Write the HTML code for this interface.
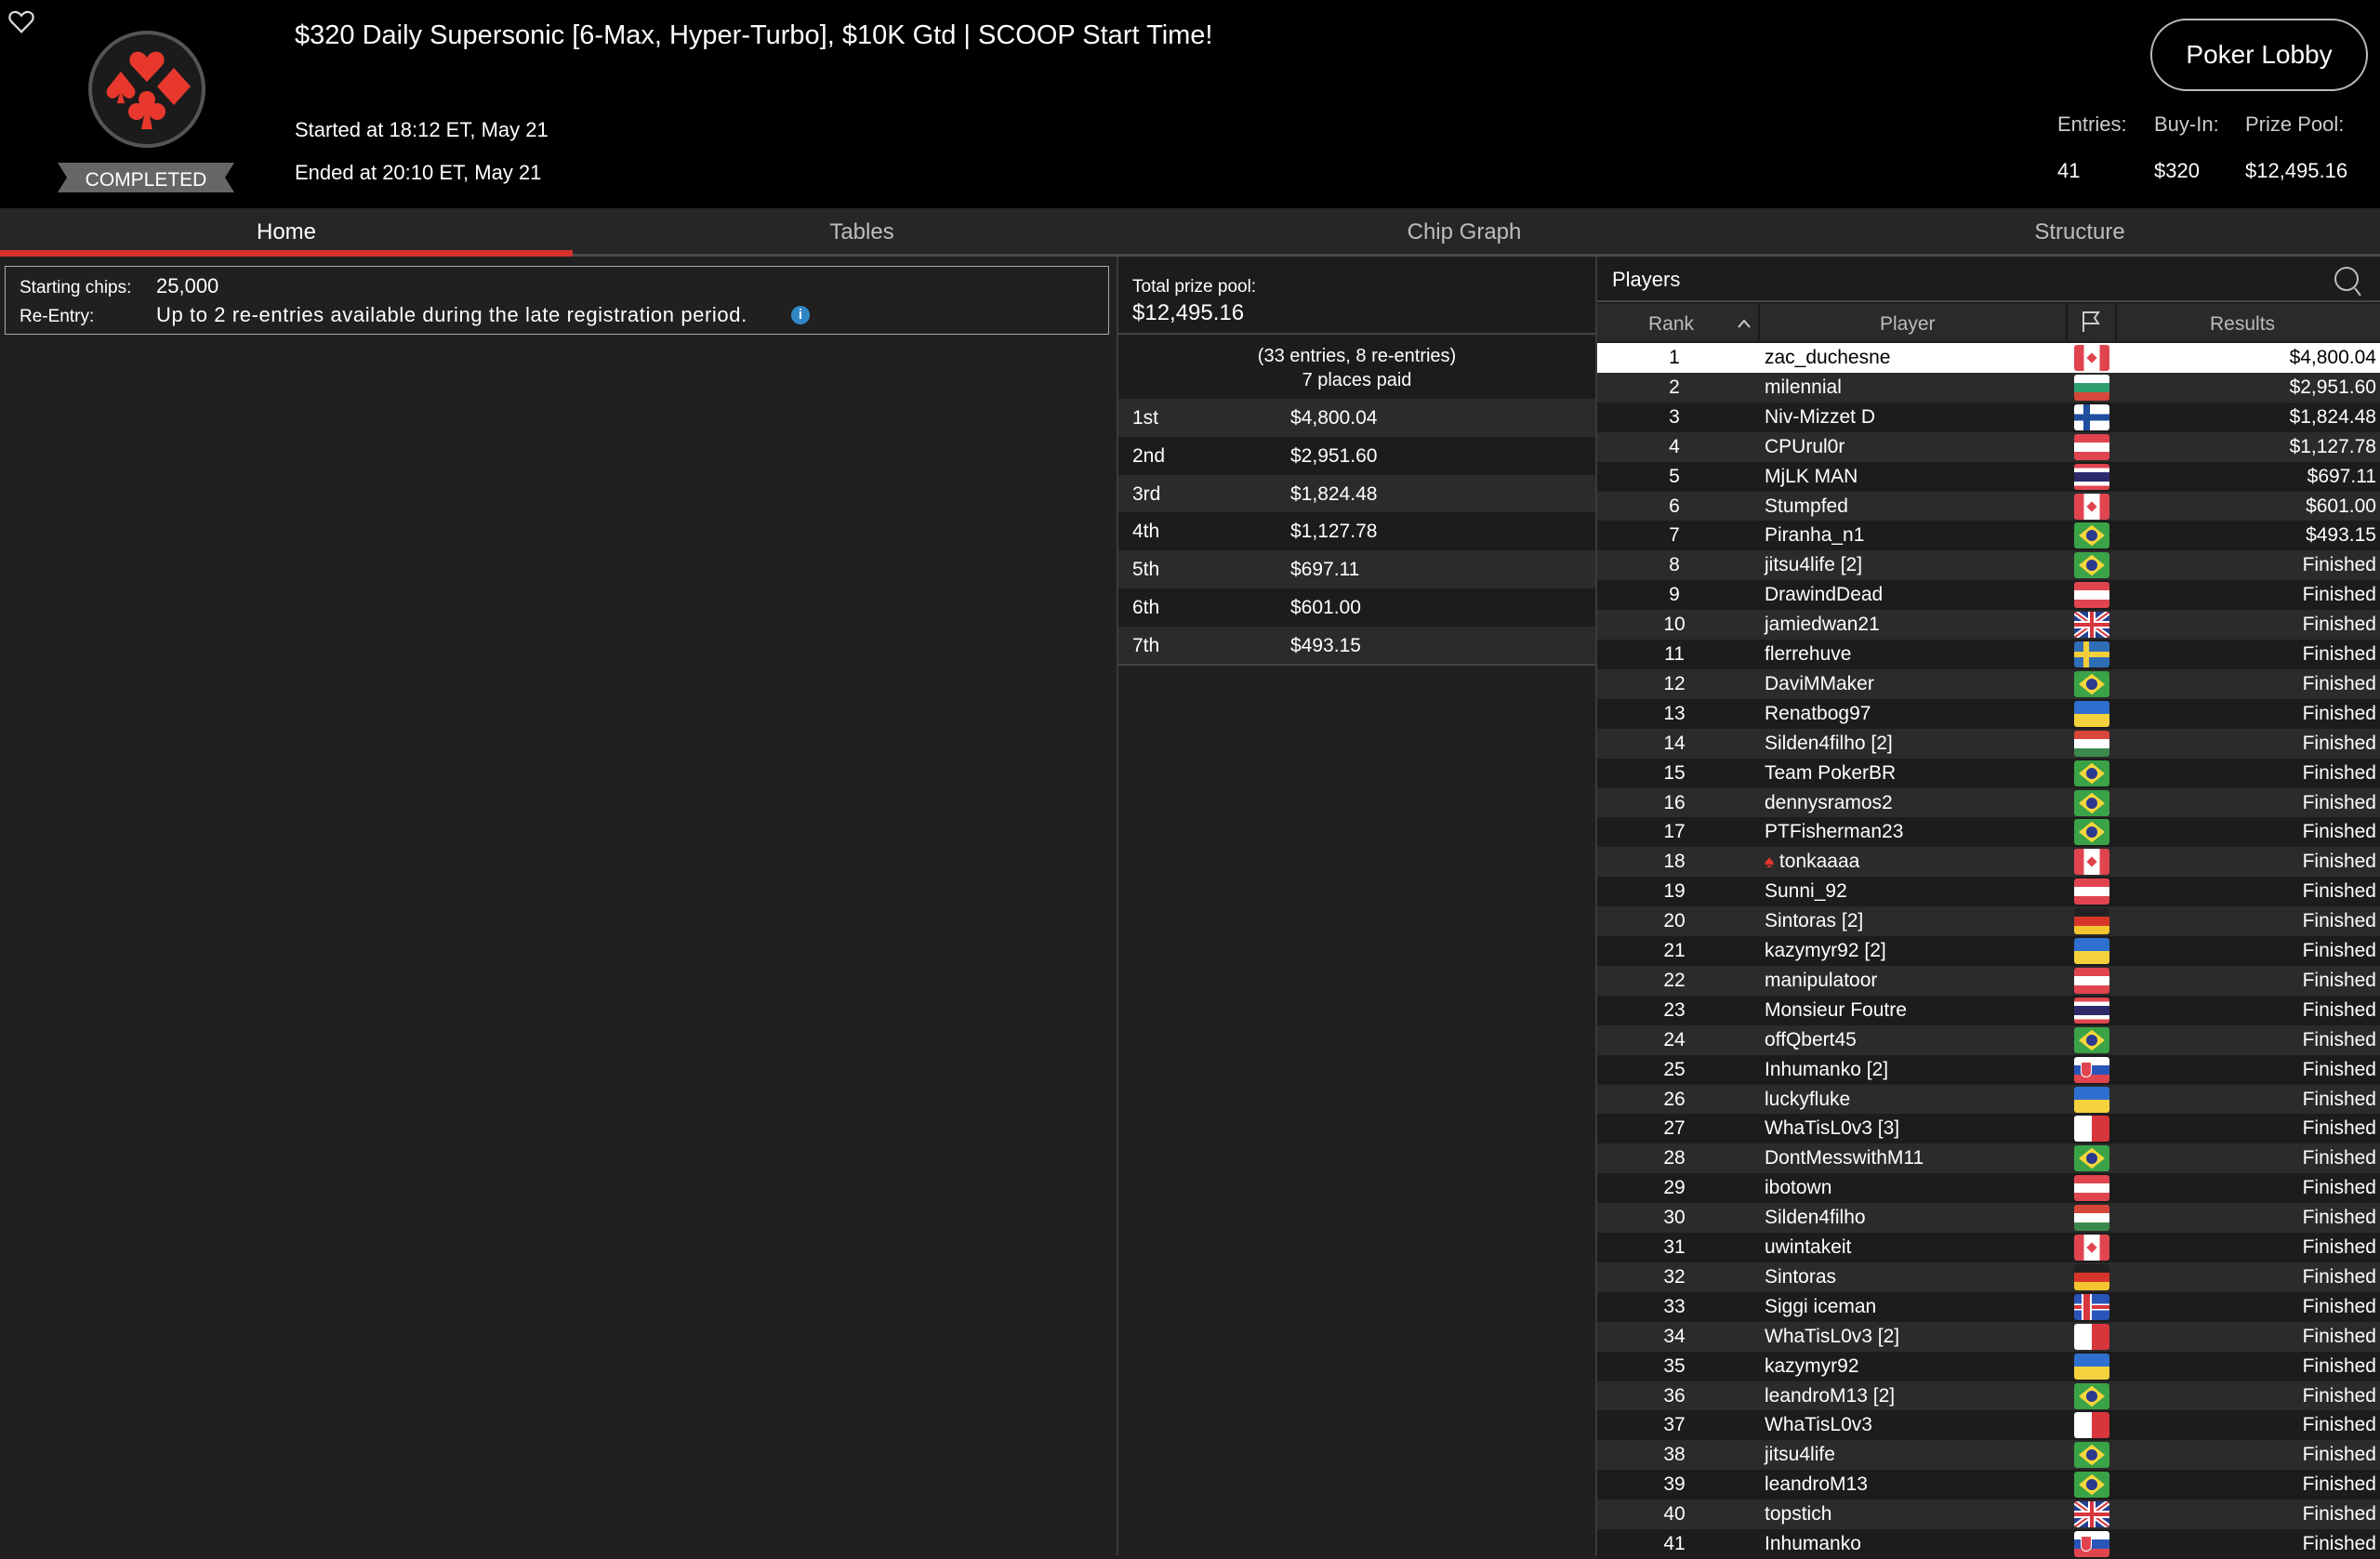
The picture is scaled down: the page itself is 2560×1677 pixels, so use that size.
<!DOCTYPE html>
<html><head><meta charset="utf-8"><style>
*{margin:0;padding:0;box-sizing:border-box}
body{width:2560px;height:1673px;overflow:hidden;background:#202020;font-family:"Liberation Sans",sans-serif;color:#fff;position:relative}
.abs{position:absolute}
#hdr{left:0;top:0;width:2560px;height:224px;background:#000}
#tabs{left:0;top:224px;width:2560px;height:52px;background:#262626;border-bottom:3px solid #4a4a4a}
.tab{position:absolute;top:0;width:640px;height:49px;line-height:52px;text-align:center;font-size:24px;color:#bdbdbd}
.fl{position:absolute;left:513px;top:2px;width:38px;height:28px;border-radius:3px;overflow:hidden}
.AT{background:linear-gradient(#e0454f 33%,#fff 33% 67%,#e0454f 67%)}
.CA{background:linear-gradient(90deg,#e0454f 27%,#fff 27% 73%,#e0454f 73%)}
.CA::after{content:"";position:absolute;left:15px;top:10px;width:8px;height:8px;background:#e0454f;transform:rotate(45deg)}
.BG{background:linear-gradient(#fff 33%,#2f9e6e 33% 67%,#d8463a 67%)}
.FI{background:linear-gradient(#fff 38%,#1f4ea0 38% 62%,#fff 62%)}
.FI::after{content:"";position:absolute;left:10px;top:0;width:7px;height:28px;background:#1f4ea0}
.TH{background:linear-gradient(#e0454f 16%,#fff 16% 33%,#2d2a6b 33% 67%,#fff 67% 84%,#e0454f 84%)}
.BR{background:#3aa247}
.BR::before{content:"";position:absolute;left:8px;top:3px;width:22px;height:22px;background:#f4d73a;transform:scaleX(1.25) rotate(45deg) scale(.72)}
.BR::after{content:"";position:absolute;left:13px;top:8px;width:12px;height:12px;border-radius:50%;background:#2b3a8f}
.GB{background:#243f8f}
.SE{background:linear-gradient(#2f6db5 40%,#f4cf3a 40% 60%,#2f6db5 60%)}
.SE::after{content:"";position:absolute;left:10px;top:0;width:6px;height:28px;background:#f4cf3a}
.UA{background:linear-gradient(#2f6fd0 50%,#f4d23d 50%)}
.HU{background:linear-gradient(#d8463a 33%,#fff 33% 67%,#3c8a4b 67%)}
.DE{background:linear-gradient(#222 33%,#d8352a 33% 67%,#f3c530 67%)}
.SK{background:linear-gradient(#fff 33%,#2a55b8 33% 67%,#e0454f 67%)}
.SK::after{content:"";position:absolute;left:7px;top:5px;width:10px;height:15px;border-radius:2px 2px 6px 6px;background:#e0454f;border:1px solid #fff}
.MT{background:linear-gradient(90deg,#fff 50%,#d8363d 50%)}
.IS{background:linear-gradient(#2a55b8 38%,#fff 38% 42%,#d8363d 42% 58%,#fff 58% 62%,#2a55b8 62%)}
.IS::after{content:"";position:absolute;left:10px;top:0;width:7px;height:28px;background:#d8363d;box-shadow:0 0 0 2px #fff}
.r{position:absolute;left:1718px;width:842px;height:31.9px;font-size:21px;line-height:32px}
.r:nth-child(odd){background:#1c1c1c}
.r:nth-child(even){background:#2b2b2b}
.r .k{position:absolute;left:0;width:166px;text-align:center}
.r .n{position:absolute;left:180px}
.r .v{position:absolute;right:4px}
.pr{position:absolute;left:1203px;width:513px;height:40.8px;line-height:41px;font-size:21px}
.pr .a{position:absolute;left:185px}
.pr span:first-child{position:absolute;left:15px}
</style></head><body>
<div id="hdr" class="abs"></div>
<svg class="abs" style="left:8px;top:8px" width="30" height="30" viewBox="0 0 24 24"><path d="M12 21 L3.5 12.3 C1 9.6 1.5 5.5 4.8 4.3 C7.4 3.3 10 4.6 12 7 C14 4.6 16.6 3.3 19.2 4.3 C22.5 5.5 23 9.6 20.5 12.3 Z" fill="none" stroke="#ddd" stroke-width="1.8"/></svg>
<svg class="abs" style="left:93px;top:31px" width="130" height="130">
<circle cx="65" cy="65" r="61" fill="#1b1b1b" stroke="#555" stroke-width="4"/>
<g fill="#e8382e">
<path transform="translate(45,21) scale(1,0.95)" d="M20 38 L4 20 C-2 13 3 2 12 4 C16 5 19 8 20 11 C21 8 24 5 28 4 C37 2 42 13 36 20 Z"/>
<path transform="translate(20,44) scale(0.85,0.95)" d="M20 2 L4 20 C-2 27 6 36 14 31 C16 30 18 28 19 26 L15 38 H25 L21 26 C22 28 24 30 26 31 C34 36 42 27 36 20 Z"/>
<path transform="translate(74,42)" d="M20 0 L38 20 L20 40 L2 20 Z"/>
<g transform="translate(45,67)"><circle cx="20" cy="9" r="9"/><circle cx="9" cy="22" r="9"/><circle cx="31" cy="22" r="9"/><circle cx="20" cy="20" r="6"/><path d="M18 22 L14 41 H26 L22 22 Z"/></g>
</g></svg>
<svg class="abs" style="left:62px;top:175px" width="190" height="32"><polygon points="0,0 190,0 180,16 190,32 0,32 10,16" fill="#666"/><text x="95" y="25" fill="#fff" font-family="Liberation Sans" font-size="21" text-anchor="middle">COMPLETED</text></svg>
<div class="abs" style="left:317px;top:22px;font-size:29px">$320 Daily Supersonic [6-Max, Hyper-Turbo], $10K Gtd | SCOOP Start Time!</div>
<div class="abs" style="left:317px;top:127px;font-size:22px">Started at 18:12 ET, May 21</div>
<div class="abs" style="left:317px;top:173px;font-size:22px">Ended at 20:10 ET, May 21</div>
<div class="abs" style="left:2313px;top:20px;width:234px;height:78px;border:2px solid #bbb;border-radius:40px;text-align:center;line-height:74px;font-size:28px">Poker Lobby</div>
<div class="abs" style="left:2213px;top:121px;font-size:22px;color:#ccc">Entries:</div>
<div class="abs" style="left:2317px;top:121px;font-size:22px;color:#ccc">Buy-In:</div>
<div class="abs" style="left:2415px;top:121px;font-size:22px;color:#ccc">Prize Pool:</div>
<div class="abs" style="left:2213px;top:171px;font-size:22px">41</div>
<div class="abs" style="left:2317px;top:171px;font-size:22px">$320</div>
<div class="abs" style="left:2415px;top:171px;font-size:22px">$12,495.16</div>

<div id="tabs" class="abs">
<div class="tab" style="left:0;color:#fff;width:616px">Home</div>
<div class="tab" style="left:607px">Tables</div>
<div class="tab" style="left:1255px">Chip Graph</div>
<div class="tab" style="left:1917px">Structure</div>
</div>
<div class="abs" style="left:0;top:269px;width:616px;height:7px;background:#d5312f"></div>

<div class="abs" style="left:5px;top:286px;width:1188px;height:74px;border:1px solid #aaa"></div>
<div class="abs" style="left:21px;top:299px;font-size:19px">Starting chips:</div>
<div class="abs" style="left:168px;top:295px;font-size:22px">25,000</div>
<div class="abs" style="left:21px;top:330px;font-size:19px">Re-Entry:</div>
<div class="abs" style="left:168px;top:326px;font-size:22px;letter-spacing:0.6px">Up to 2 re-entries available during the late registration period.</div>
<div class="abs" style="left:851px;top:329px;width:20px;height:20px;border-radius:50%;background:#2f86c5;color:#fff;font-size:15px;text-align:center;line-height:20px;font-weight:bold">i</div>

<div class="abs" style="left:1201px;top:276px;width:2px;height:1397px;background:#3a3a3a"></div>
<div class="abs" style="left:1203px;top:278px;width:513px;height:82px;background:#1c1c1c;border-bottom:2px solid #444"></div>
<div class="abs" style="left:1218px;top:298px;font-size:19px">Total prize pool:</div>
<div class="abs" style="left:1218px;top:323px;font-size:24px">$12,495.16</div>
<div class="abs" style="left:1203px;top:362px;width:513px;height:67px;background:#1c1c1c;text-align:center;font-size:20px;line-height:26px;padding-top:8px">(33 entries, 8 re-entries)<br>7 places paid</div>
<div class="pr" style="top:429px;background:#2b2b2b"><span>1st</span><span class="a">$4,800.04</span></div>
<div class="pr" style="top:469.8px;background:#1c1c1c"><span>2nd</span><span class="a">$2,951.60</span></div>
<div class="pr" style="top:510.6px;background:#2b2b2b"><span>3rd</span><span class="a">$1,824.48</span></div>
<div class="pr" style="top:551.4px;background:#1c1c1c"><span>4th</span><span class="a">$1,127.78</span></div>
<div class="pr" style="top:592.2px;background:#2b2b2b"><span>5th</span><span class="a">$697.11</span></div>
<div class="pr" style="top:633px;background:#1c1c1c"><span>6th</span><span class="a">$601.00</span></div>
<div class="pr" style="top:673.8px;background:#2b2b2b"><span>7th</span><span class="a">$493.15</span></div>
<div class="abs" style="left:1203px;top:714px;width:513px;height:2px;background:#444"></div>
<div class="abs" style="left:1716px;top:276px;width:2px;height:1397px;background:#3a3a3a"></div>

<div class="abs" style="left:1718px;top:278px;width:842px;height:47px;background:#1c1c1c;border-bottom:2px solid #444"></div>
<div class="abs" style="left:1734px;top:288px;font-size:22px">Players</div>
<svg class="abs" style="left:2508px;top:284px" width="34" height="38" viewBox="0 0 34 38"><circle cx="16" cy="16" r="12" fill="none" stroke="#bbb" stroke-width="2"/><path d="M25 26 L31 34" stroke="#bbb" stroke-width="2"/></svg>
<div class="abs" style="left:1718px;top:327px;width:842px;height:40px;background:#2a2a2a"></div>
<div class="abs" style="left:1891px;top:327px;width:2px;height:40px;background:#1a1a1a"></div>
<div class="abs" style="left:2222px;top:327px;width:2px;height:40px;background:#1a1a1a"></div>
<div class="abs" style="left:2275px;top:327px;width:2px;height:40px;background:#1a1a1a"></div>
<div class="abs" style="left:1773px;top:337px;font-size:21px;color:#bbb">Rank</div>
<svg class="abs" style="left:1868px;top:342px" width="16" height="12"><path d="M2 10 L8 3 L14 10" fill="none" stroke="#ccc" stroke-width="2"/></svg>
<div class="abs" style="left:2022px;top:337px;font-size:21px;color:#bbb">Player</div>
<svg class="abs" style="left:2236px;top:333px" width="26" height="26" viewBox="0 0 26 26"><path d="M5 24 V3 H21 L17 9 L21 15 H5" fill="none" stroke="#ccc" stroke-width="2"/></svg>
<div class="abs" style="left:2377px;top:337px;font-size:21px;color:#bbb">Results</div>

<div class="abs" style="left:0;top:369px;width:2560px">
<div class="r" style="top:0;background:#fff;color:#000"><span class="k">1</span><span class="n">zac_duchesne</span><div class="fl CA"></div><span class="v">$4,800.04</span></div>
<div class="r" style="top:31.9px"><span class="k">2</span><span class="n">milennial</span><div class="fl BG"></div><span class="v">$2,951.60</span></div>
<div class="r" style="top:63.8px"><span class="k">3</span><span class="n">Niv-Mizzet D</span><div class="fl FI"></div><span class="v">$1,824.48</span></div>
<div class="r" style="top:95.7px"><span class="k">4</span><span class="n">CPUrul0r</span><div class="fl AT"></div><span class="v">$1,127.78</span></div>
<div class="r" style="top:127.6px"><span class="k">5</span><span class="n">MjLK MAN</span><div class="fl TH"></div><span class="v">$697.11</span></div>
<div class="r" style="top:159.5px"><span class="k">6</span><span class="n">Stumpfed</span><div class="fl CA"></div><span class="v">$601.00</span></div>
<div class="r" style="top:191.4px"><span class="k">7</span><span class="n">Piranha_n1</span><div class="fl BR"></div><span class="v">$493.15</span></div>
<div class="r" style="top:223.3px"><span class="k">8</span><span class="n">jitsu4life [2]</span><div class="fl BR"></div><span class="v">Finished</span></div>
<div class="r" style="top:255.2px"><span class="k">9</span><span class="n">DrawindDead</span><div class="fl AT"></div><span class="v">Finished</span></div>
<div class="r" style="top:287.1px"><span class="k">10</span><span class="n">jamiedwan21</span><div class="fl GB"><svg width="38" height="28"><path d="M0 0L38 28M38 0L0 28" stroke="#fff" stroke-width="6"/><path d="M0 0L38 28M38 0L0 28" stroke="#d8363d" stroke-width="2"/><path d="M19 0V28M0 14H38" stroke="#fff" stroke-width="8"/><path d="M19 0V28M0 14H38" stroke="#d8363d" stroke-width="4"/></svg></div><span class="v">Finished</span></div>
<div class="r" style="top:319px"><span class="k">11</span><span class="n">flerrehuve</span><div class="fl SE"></div><span class="v">Finished</span></div>
<div class="r" style="top:350.9px"><span class="k">12</span><span class="n">DaviMMaker</span><div class="fl BR"></div><span class="v">Finished</span></div>
<div class="r" style="top:382.8px"><span class="k">13</span><span class="n">Renatbog97</span><div class="fl UA"></div><span class="v">Finished</span></div>
<div class="r" style="top:414.7px"><span class="k">14</span><span class="n">Silden4filho [2]</span><div class="fl HU"></div><span class="v">Finished</span></div>
<div class="r" style="top:446.6px"><span class="k">15</span><span class="n">Team PokerBR</span><div class="fl BR"></div><span class="v">Finished</span></div>
<div class="r" style="top:478.5px"><span class="k">16</span><span class="n">dennysramos2</span><div class="fl BR"></div><span class="v">Finished</span></div>
<div class="r" style="top:510.4px"><span class="k">17</span><span class="n">PTFisherman23</span><div class="fl BR"></div><span class="v">Finished</span></div>
<div class="r" style="top:542.3px"><span class="k">18</span><span class="n"><span style="color:#e8382e;font-size:19px">♠</span> tonkaaaa</span><div class="fl CA"></div><span class="v">Finished</span></div>
<div class="r" style="top:574.2px"><span class="k">19</span><span class="n">Sunni_92</span><div class="fl AT"></div><span class="v">Finished</span></div>
<div class="r" style="top:606.1px"><span class="k">20</span><span class="n">Sintoras [2]</span><div class="fl DE"></div><span class="v">Finished</span></div>
<div class="r" style="top:638px"><span class="k">21</span><span class="n">kazymyr92 [2]</span><div class="fl UA"></div><span class="v">Finished</span></div>
<div class="r" style="top:669.9px"><span class="k">22</span><span class="n">manipulatoor</span><div class="fl AT"></div><span class="v">Finished</span></div>
<div class="r" style="top:701.8px"><span class="k">23</span><span class="n">Monsieur Foutre</span><div class="fl TH"></div><span class="v">Finished</span></div>
<div class="r" style="top:733.7px"><span class="k">24</span><span class="n">offQbert45</span><div class="fl BR"></div><span class="v">Finished</span></div>
<div class="r" style="top:765.6px"><span class="k">25</span><span class="n">Inhumanko [2]</span><div class="fl SK"></div><span class="v">Finished</span></div>
<div class="r" style="top:797.5px"><span class="k">26</span><span class="n">luckyfluke</span><div class="fl UA"></div><span class="v">Finished</span></div>
<div class="r" style="top:829.4px"><span class="k">27</span><span class="n">WhaTisL0v3 [3]</span><div class="fl MT"></div><span class="v">Finished</span></div>
<div class="r" style="top:861.3px"><span class="k">28</span><span class="n">DontMesswithM11</span><div class="fl BR"></div><span class="v">Finished</span></div>
<div class="r" style="top:893.2px"><span class="k">29</span><span class="n">ibotown</span><div class="fl AT"></div><span class="v">Finished</span></div>
<div class="r" style="top:925.1px"><span class="k">30</span><span class="n">Silden4filho</span><div class="fl HU"></div><span class="v">Finished</span></div>
<div class="r" style="top:957px"><span class="k">31</span><span class="n">uwintakeit</span><div class="fl CA"></div><span class="v">Finished</span></div>
<div class="r" style="top:988.9px"><span class="k">32</span><span class="n">Sintoras</span><div class="fl DE"></div><span class="v">Finished</span></div>
<div class="r" style="top:1020.8px"><span class="k">33</span><span class="n">Siggi iceman</span><div class="fl IS"></div><span class="v">Finished</span></div>
<div class="r" style="top:1052.7px"><span class="k">34</span><span class="n">WhaTisL0v3 [2]</span><div class="fl MT"></div><span class="v">Finished</span></div>
<div class="r" style="top:1084.6px"><span class="k">35</span><span class="n">kazymyr92</span><div class="fl UA"></div><span class="v">Finished</span></div>
<div class="r" style="top:1116.5px"><span class="k">36</span><span class="n">leandroM13 [2]</span><div class="fl BR"></div><span class="v">Finished</span></div>
<div class="r" style="top:1148.4px"><span class="k">37</span><span class="n">WhaTisL0v3</span><div class="fl MT"></div><span class="v">Finished</span></div>
<div class="r" style="top:1180.3px"><span class="k">38</span><span class="n">jitsu4life</span><div class="fl BR"></div><span class="v">Finished</span></div>
<div class="r" style="top:1212.2px"><span class="k">39</span><span class="n">leandroM13</span><div class="fl BR"></div><span class="v">Finished</span></div>
<div class="r" style="top:1244.1px"><span class="k">40</span><span class="n">topstich</span><div class="fl GB"><svg width="38" height="28"><path d="M0 0L38 28M38 0L0 28" stroke="#fff" stroke-width="6"/><path d="M0 0L38 28M38 0L0 28" stroke="#d8363d" stroke-width="2"/><path d="M19 0V28M0 14H38" stroke="#fff" stroke-width="8"/><path d="M19 0V28M0 14H38" stroke="#d8363d" stroke-width="4"/></svg></div><span class="v">Finished</span></div>
<div class="r" style="top:1276px"><span class="k">41</span><span class="n">Inhumanko</span><div class="fl SK"></div><span class="v">Finished</span></div>
</div>
</body></html>
